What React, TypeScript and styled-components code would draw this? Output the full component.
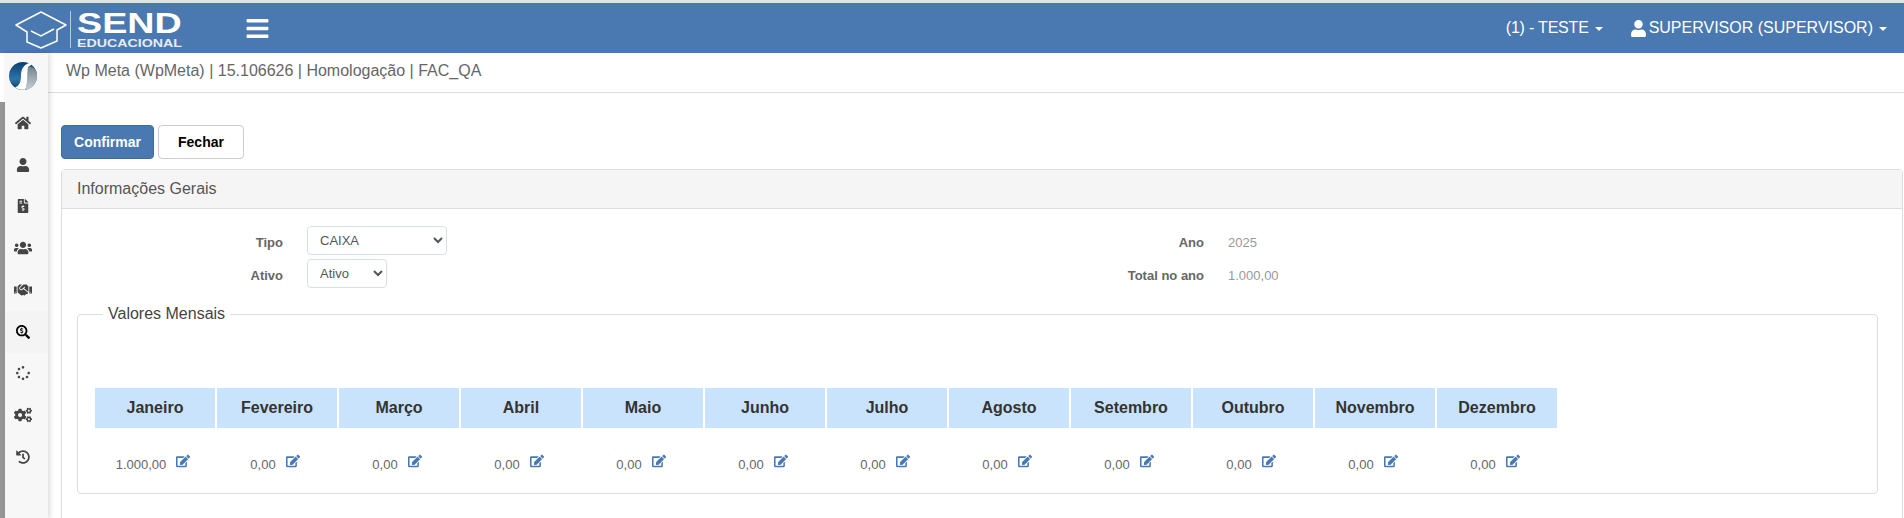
import { createGlobalStyle, styled } from "styled-components";
import {
  FaBars,
  FaCogs,
  FaEdit,
  FaFileInvoiceDollar,
  FaHandshake,
  FaHistory,
  FaHome,
  FaSearchDollar,
  FaSpinner,
  FaUser,
  FaUsers,
} from "react-icons/fa";

const GlobalStyle = createGlobalStyle`
  html, body {
    margin: 0;
    height: 518px;
    overflow: hidden;
    background: #fff;
    font-family: "Liberation Sans", Arial, sans-serif;
  }
  * { box-sizing: border-box; }
`;

const Page = styled.div`
  height: 518px;
  display: flex;
  flex-direction: column;
  border-top: 3px solid #e2e2e2;
  overflow: hidden;
`;

const TopBar = styled.header`
  height: 50px;
  flex: none;
  display: flex;
  align-items: center;
  background: #4a78b0;
  color: #fff;
  padding: 0 17px 0 15px;
`;

const Brand = styled.div`
  display: flex;
  align-items: center;
  height: 100%;
`;

const CapSvg = styled.svg`
  margin-top: 3px;
`;

const BrandDivider = styled.div`
  width: 1px;
  height: 37px;
  margin: 3px 6px 0 3px;
  background: #b9cbe0;
`;

const BrandText = styled.div`
  width: 105px;
  display: flex;
  flex-direction: column;
  gap: 3px;
  margin-top: 3px;
`;

const BrandName = styled.span`
  display: block;
  font-size: 29px;
  line-height: 23px;
  font-weight: 700;
  transform: scaleX(1.3);
  transform-origin: left center;
  white-space: nowrap;
`;

const BrandSub = styled.span`
  display: block;
  font-size: 11px;
  line-height: 10px;
  font-weight: 700;
  color: #e6edf5;
  transform: scaleX(1.29);
  transform-origin: left center;
  white-space: nowrap;
`;

const MenuToggle = styled.div`
  margin-left: 63px;
  display: flex;
  font-size: 25px;
`;

const NavRight = styled.nav`
  margin-left: auto;
  display: flex;
  align-items: center;
  gap: 27px;
  font-size: 16px;
`;

const NavItem = styled.div`
  display: flex;
  align-items: center;
  gap: 5px;
  white-space: nowrap;
`;

const TenantName = styled.span`
  letter-spacing: -0.2px;
`;

const UserName = styled.span`
  margin-left: -3px;
`;

const Caret = styled.span`
  width: 0;
  height: 0;
  margin-left: 1px;
  margin-top: 2px;
  border-left: 4px solid transparent;
  border-right: 4px solid transparent;
  border-top: 4px solid #fff;
`;

const Body = styled.div`
  flex: 1;
  display: flex;
  min-height: 0;
`;

const ScrollTrack = styled.div`
  width: 5px;
  flex: none;
  padding-top: 49px;
  background: #fff;
`;

const ScrollThumb = styled.div`
  height: 100%;
  background: #969696;
`;

const Sidebar = styled.aside`
  width: 43px;
  flex: none;
  background: #f7f7f7;
  box-shadow: 2px 0 5px rgba(0, 0, 0, 0.14);
  z-index: 1;
`;

const SideLogo = styled.div`
  height: 49px;
  display: flex;
  align-items: center;
  justify-content: center;
  padding: 0 8px 3px 0;
`;

const SideItem = styled.div<{ $active?: boolean }>`
  height: 41.75px;
  display: flex;
  align-items: center;
  justify-content: center;
  padding-right: 7px;
  color: ${(p) => (p.$active ? "#000" : "#444")};
  background: ${(p) => (p.$active ? "#f4f4f4" : "transparent")};
`;

const Main = styled.main`
  flex: 1;
  min-width: 0;
`;

const Breadcrumb = styled.div`
  height: 40px;
  display: flex;
  align-items: center;
  padding: 0 0 3px 18px;
  border-bottom: 1px solid #dcdcdc;
  font-size: 16px;
  color: #666;
`;

const Content = styled.div`
  padding: 32px 1px 0 13px;
`;

const Actions = styled.div`
  display: flex;
  gap: 4px;
  margin-bottom: 10px;
`;

const Button = styled.button<{ $primary?: boolean }>`
  height: 34px;
  width: ${(p) => (p.$primary ? "93px" : "86px")};
  padding: 0;
  font-family: inherit;
  font-size: 14px;
  font-weight: 700;
  border-radius: 4px;
  color: ${(p) => (p.$primary ? "#fff" : "#000")};
  background: ${(p) => (p.$primary ? "#4a78b0" : "#fff")};
  border: 1px solid ${(p) => (p.$primary ? "#3c6aa3" : "#ccc")};
`;

const Panel = styled.section`
  border: 1px solid #ddd;
  border-radius: 4px;
  height: 400px;
`;

const PanelHeading = styled.div`
  height: 39px;
  display: flex;
  align-items: center;
  padding-left: 15px;
  background: #f5f5f5;
  border-bottom: 1px solid #d9dee3;
  font-size: 16px;
  color: #555;
`;

const PanelBody = styled.div`
  padding: 17px 24px 0 15px;
`;

const FormGrid = styled.div`
  display: grid;
  grid-template-columns: 206px 673px 200px 1fr;
  grid-auto-rows: 29px;
  column-gap: 24px;
  row-gap: 4px;
  margin-bottom: 17px;
`;

const FieldLabel = styled.label`
  display: flex;
  align-items: center;
  justify-content: flex-end;
  padding-top: 4px;
  font-size: 13px;
  font-weight: 700;
  color: #666;
`;

const Select = styled.select<{ $width: number }>`
  width: ${(p) => p.$width}px;
  height: 29px;
  padding: 0 8px;
  font-family: inherit;
  font-size: 13px;
  color: #555;
  background: #fff;
  border: 1px solid #d8dfe6;
  border-radius: 4px;
`;

const StaticValue = styled.div`
  display: flex;
  align-items: center;
  padding-top: 4px;
  font-size: 13px;
  color: #999;
`;

const Fieldset = styled.fieldset`
  margin: 0;
  min-width: 0;
  padding: 65px 17px 0;
  height: 189px;
  border: 1px solid #ddd;
  border-radius: 4px;
`;

const Legend = styled.legend`
  margin-left: 8px;
  padding: 0 5px;
  font-size: 16px;
  line-height: 18px;
  color: #444;
`;

const MonthGrid = styled.div`
  display: grid;
  grid-template-columns: repeat(12, 120px);
  column-gap: 2px;
`;

const MonthHead = styled.div`
  height: 40px;
  display: flex;
  align-items: center;
  justify-content: center;
  background: #cae3fc;
  font-size: 16px;
  font-weight: 700;
  color: #333;
`;

const MonthValue = styled.div`
  height: 65px;
  display: flex;
  align-items: flex-start;
  justify-content: center;
  gap: 10px;
  padding: 29px 4px 0 0;
  font-size: 13px;
  line-height: 16px;
  color: #666;
`;

const EditIcon = styled(FaEdit)`
  margin-top: -3px;
  font-size: 14px;
  color: #4a78b0;
`;

const months: [string, string][] = [
  ["Janeiro", "1.000,00"],
  ["Fevereiro", "0,00"],
  ["Março", "0,00"],
  ["Abril", "0,00"],
  ["Maio", "0,00"],
  ["Junho", "0,00"],
  ["Julho", "0,00"],
  ["Agosto", "0,00"],
  ["Setembro", "0,00"],
  ["Outubro", "0,00"],
  ["Novembro", "0,00"],
  ["Dezembro", "0,00"],
];

function CapLogo() {
  return (
    <CapSvg width="52" height="38" viewBox="0 0 52 38" fill="none" stroke="#fff" strokeWidth="1.5">
      <path d="M26 1 L51 14 L42 19 L42 30 L26 37 L12 31 L12 21 L1 14 Z" strokeLinejoin="round" />
      <path d="M16 20 L26 25 L39 18" />
    </CapSvg>
  );
}

function SideMark() {
  return (
    <svg width="28" height="28" viewBox="0 0 28 28">
      <defs>
        <linearGradient id="markBlue" x1="0" y1="0" x2="0" y2="1">
          <stop offset="0" stopColor="#0b3f70" />
          <stop offset="0.6" stopColor="#2f74a8" />
          <stop offset="1" stopColor="#0c3a66" />
        </linearGradient>
        <linearGradient id="markGrey" x1="0" y1="0" x2="0" y2="1">
          <stop offset="0" stopColor="#76848f" />
          <stop offset="1" stopColor="#c9d0d4" />
        </linearGradient>
      </defs>
      <circle cx="14" cy="14" r="14" fill="url(#markBlue)" />
      <path d="M19 5 C24 4 28 8 28 14 A14 14 0 0 1 16 27.8 C19 23 18 12 19 5 Z" fill="url(#markGrey)" />
      <path d="M20 1 C14 3 12 8 12 14 C12 20 10 24 6 25.5 C9 27.5 12 28 16 27.8 C19 23 18 12 19 5 L23 2.5 Z" fill="#fff" />
    </svg>
  );
}

function App() {
  return (
    <Page>
      <GlobalStyle />
      <TopBar>
        <Brand>
          <CapLogo />
          <BrandDivider />
          <BrandText>
            <BrandName>SEND</BrandName>
            <BrandSub>EDUCACIONAL</BrandSub>
          </BrandText>
        </Brand>
        <MenuToggle>
          <FaBars />
        </MenuToggle>
        <NavRight>
          <NavItem>
            <TenantName>(1) - TESTE</TenantName>
            <Caret />
          </NavItem>
          <NavItem>
            <FaUser size={17} />
            <UserName>SUPERVISOR (SUPERVISOR)</UserName>
            <Caret />
          </NavItem>
        </NavRight>
      </TopBar>
      <Body>
        <ScrollTrack>
          <ScrollThumb />
        </ScrollTrack>
        <Sidebar>
          <SideLogo>
            <SideMark />
          </SideLogo>
          <SideItem><FaHome size={16} /></SideItem>
          <SideItem><FaUser size={14} /></SideItem>
          <SideItem><FaFileInvoiceDollar size={14} /></SideItem>
          <SideItem><FaUsers size={18} /></SideItem>
          <SideItem><FaHandshake size={18} /></SideItem>
          <SideItem $active><FaSearchDollar size={14} /></SideItem>
          <SideItem><FaSpinner size={14} /></SideItem>
          <SideItem><FaCogs size={18} /></SideItem>
          <SideItem><FaHistory size={14} /></SideItem>
        </Sidebar>
        <Main>
          <Breadcrumb>Wp Meta (WpMeta) | 15.106626 | Homologação | FAC_QA</Breadcrumb>
          <Content>
            <Actions>
              <Button $primary>Confirmar</Button>
              <Button>Fechar</Button>
            </Actions>
            <Panel>
              <PanelHeading>Informações Gerais</PanelHeading>
              <PanelBody>
                <FormGrid>
                  <FieldLabel>Tipo</FieldLabel>
                  <div>
                    <Select $width={140} defaultValue="CAIXA">
                      <option>CAIXA</option>
                    </Select>
                  </div>
                  <FieldLabel>Ano</FieldLabel>
                  <StaticValue>2025</StaticValue>
                  <FieldLabel>Ativo</FieldLabel>
                  <div>
                    <Select $width={80} defaultValue="Ativo">
                      <option>Ativo</option>
                    </Select>
                  </div>
                  <FieldLabel>Total no ano</FieldLabel>
                  <StaticValue>1.000,00</StaticValue>
                </FormGrid>
                <Fieldset>
                  <Legend>Valores Mensais</Legend>
                  <MonthGrid>
                    {months.map(([name]) => (
                      <MonthHead key={name}>{name}</MonthHead>
                    ))}
                    {months.map(([name, value]) => (
                      <MonthValue key={name}>
                        {value}
                        <EditIcon />
                      </MonthValue>
                    ))}
                  </MonthGrid>
                </Fieldset>
              </PanelBody>
            </Panel>
          </Content>
        </Main>
      </Body>
    </Page>
  );
}

export default App;
